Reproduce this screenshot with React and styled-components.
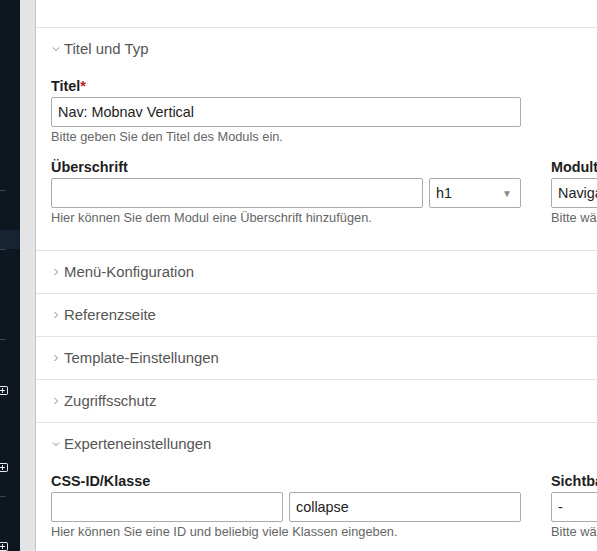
import React from "react";
import styled, { createGlobalStyle } from "styled-components";

const GlobalStyle = createGlobalStyle`
    html, body {
        margin: 0;
        padding: 0;
        background: #ffffff;
    }
    body {
        font-family: "Liberation Sans", Arial, sans-serif;
        color: #222;
    }
`;

// Layout
const Page = styled.div`
    display: flex;
    width: 597px;
    height: 551px;
    overflow: hidden;
`;

const Sidebar = styled.div`
    width: 20px;
    flex-shrink: 0;
    background: #0e1720;
    display: flex;
    flex-direction: column;
`;

const SideRow = styled.div`
    margin-top: ${(p) => p.$gap || 0}px;
    height: ${(p) => p.$h || 1}px;
    display: flex;
    align-items: center;
    background: ${(p) => (p.$active ? "#162332" : "transparent")};
`;

const SideLine = styled.div`
    width: 6px;
    height: 1px;
    background: #3b4552;
`;

const PlusBox = styled.div`
    width: 7px;
    height: 7px;
    border: 1px solid #e8e8e8;
    border-left: none;
    border-radius: 0 2px 2px 0;
    position: relative;
    &::before,
    &::after {
        content: "";
        position: absolute;
        background: #e8e8e8;
    }
    &::before {
        left: 0;
        right: 2px;
        top: 3px;
        height: 1px;
    }
    &::after {
        left: 2px;
        top: 1px;
        bottom: 1px;
        width: 1px;
    }
`;

const Gutter = styled.div`
    width: 15px;
    flex-shrink: 0;
    background: #e4e4e6;
    border-right: 1px solid #c4c4c6;
`;

const Main = styled.div`
    flex: 1;
    min-width: 0;
    overflow: hidden;
    padding-top: 27px;
`;

const Section = styled.div`
    border-top: 1px solid #e4e4e4;
`;

const SectionHeader = styled.div`
    height: 42px;
    display: flex;
    align-items: center;
    padding-left: 16px;
    gap: 4px;
    font-size: 14.9px;
    color: #555;
`;

const SectionBody = styled.div`
    padding: 8px 0 25px 15px;
    display: grid;
    grid-template-columns: 470px 470px;
    column-gap: 30px;
    row-gap: 15px;
`;

const Field = styled.div`
    display: flex;
    flex-direction: column;
`;

const Label = styled.div`
    font-size: 14.4px;
    font-weight: bold;
    line-height: 17px;
    margin-bottom: 2px;
    color: #1e1e1e;
    white-space: nowrap;
`;

const Required = styled.span`
    color: #c41a1a;
`;

const Controls = styled.div`
    display: flex;
    gap: ${(p) => p.$gap || 6}px;
`;

const Input = styled.input`
    box-sizing: border-box;
    height: 30px;
    flex: 1;
    min-width: 0;
    border: 1px solid #aaaaaa;
    border-radius: 2px;
    padding: 0 6px;
    font-family: inherit;
    font-size: 14.4px;
    color: #222;
    background: #fff;
    outline: none;
`;

const SelectBox = styled.div`
    box-sizing: border-box;
    height: 30px;
    width: ${(p) => p.$width}px;
    flex: none;
    border: 1px solid #aaaaaa;
    border-radius: 2px;
    padding: 0 8px 0 6px;
    display: flex;
    align-items: center;
    justify-content: space-between;
    font-size: 14.4px;
    color: #222;
`;

const Caret = styled.span`
    font-size: 10px;
    color: #8a8a8a;
`;

const Help = styled.div`
    font-size: 12.8px;
    line-height: 14px;
    margin-top: 3px;
    color: #666;
    white-space: nowrap;
`;

const Chevron = ({ open }) => (
    <svg width="8" height="8" viewBox="0 0 8 8" fill="none">
        {open ? (
            <polyline points="1,2.5 4,5.5 7,2.5" stroke="#888" strokeWidth="1" />
        ) : (
            <polyline points="2.5,1 5.5,4 2.5,7" stroke="#888" strokeWidth="1" />
        )}
    </svg>
);

const collapsed = [
    "Menü-Konfiguration",
    "Referenzseite",
    "Template-Einstellungen",
    "Zugriffsschutz",
];

const App = () => {
    return (
        <>
            <GlobalStyle />
            <Page>
                <Sidebar>
                    <SideRow $gap={190}><SideLine /></SideRow>
                    <SideRow $gap={39} $h={20} $active />
                    <SideRow><SideLine /></SideRow>
                    <SideRow $gap={89}><SideLine /></SideRow>
                    <SideRow $gap={46} $h={9}><PlusBox /></SideRow>
                    <SideRow $gap={68} $h={9}><PlusBox /></SideRow>
                    <SideRow $gap={24}><SideLine /></SideRow>
                    <SideRow $gap={45} $h={9}><PlusBox /></SideRow>
                </Sidebar>
                <Gutter />
                <Main>
                    <Section>
                        <SectionHeader>
                            <Chevron open />
                            Titel und Typ
                        </SectionHeader>
                        <SectionBody>
                            <Field>
                                <Label>
                                    Titel<Required>*</Required>
                                </Label>
                                <Controls>
                                    <Input defaultValue="Nav: Mobnav Vertical" />
                                </Controls>
                                <Help>Bitte geben Sie den Titel des Moduls ein.</Help>
                            </Field>
                            <div />
                            <Field>
                                <Label>Überschrift</Label>
                                <Controls $gap={6}>
                                    <Input />
                                    <SelectBox $width={92}>
                                        h1
                                        <Caret>▼</Caret>
                                    </SelectBox>
                                </Controls>
                                <Help>Hier können Sie dem Modul eine Überschrift hinzufügen.</Help>
                            </Field>
                            <Field>
                                <Label>Modultyp</Label>
                                <Controls>
                                    <Input defaultValue="Navigationsmenü" />
                                </Controls>
                                <Help>Bitte wählen Sie den Typ des Moduls.</Help>
                            </Field>
                        </SectionBody>
                    </Section>
                    {collapsed.map((title) => (
                        <Section key={title}>
                            <SectionHeader>
                                <Chevron />
                                {title}
                            </SectionHeader>
                        </Section>
                    ))}
                    <Section>
                        <SectionHeader>
                            <Chevron open />
                            Experteneinstellungen
                        </SectionHeader>
                        <SectionBody>
                            <Field>
                                <Label>CSS-ID/Klasse</Label>
                                <Controls>
                                    <Input />
                                    <Input defaultValue="collapse" />
                                </Controls>
                                <Help>Hier können Sie eine ID und beliebig viele Klassen eingeben.</Help>
                            </Field>
                            <Field>
                                <Label>Sichtbarkeit</Label>
                                <Controls>
                                    <Input defaultValue="-" />
                                </Controls>
                                <Help>Bitte wählen Sie die Sichtbarkeit.</Help>
                            </Field>
                        </SectionBody>
                    </Section>
                </Main>
            </Page>
        </>
    );
};

export default App;
